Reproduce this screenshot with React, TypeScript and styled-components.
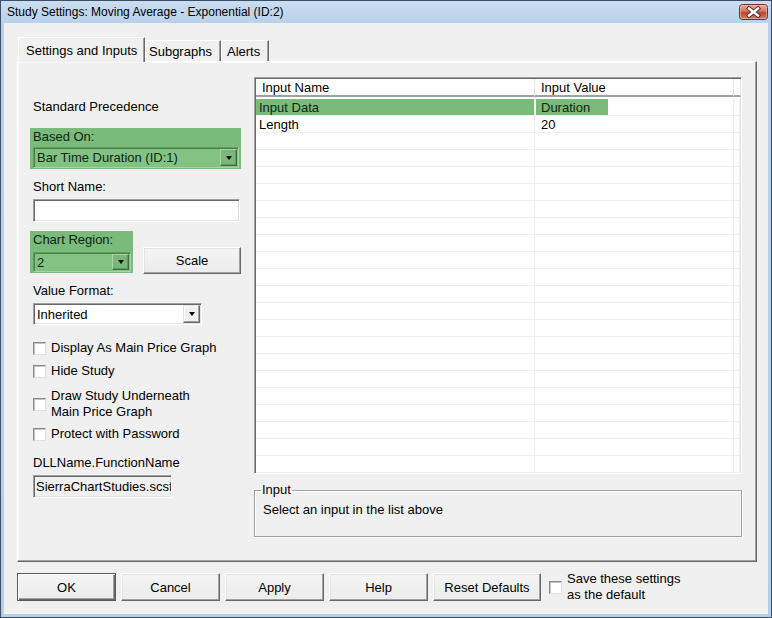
import React from "react";
import styled, { createGlobalStyle, css } from "styled-components";

const GlobalStyle = createGlobalStyle`
  html, body {
    margin: 0;
    padding: 0;
    background: #ffffff;
  }
  body {
    font-family: "Liberation Sans", Arial, sans-serif;
    font-size: 13px;
    color: #000;
  }
  * {
    box-sizing: border-box;
  }
`;

const GREEN = "#7aba7a";
const GREEN_FIELD = "#82c282";

const inputRows = [
  { name: "Input Data", value: "Duration", active: true },
  { name: "Length", value: "20", active: false },
];

const EMPTY_ROWS = 22;

const Window = styled.div`
  width: 772px;
  height: 618px;
  border: 1px solid #3d4f66;
  background: linear-gradient(#cadcf0, #b9d1ea 22px, #b6cfe9);
  display: flex;
  flex-direction: column;
`;

const TitleBar = styled.div`
  height: 22px;
  display: flex;
  align-items: center;
  justify-content: space-between;
  padding: 0 3px 0 6px;
  font-size: 12px;
  color: #000;
`;

const Client = styled.div`
  flex: 1;
  margin: 0 3px 3px 3px;
  background: #f0f0f0;
  padding: 14px 0 0 13px;
  display: flex;
  flex-direction: column;
`;

const TabStrip = styled.div`
  display: flex;
  align-items: flex-end;
  height: 24px;
  padding-left: 1px;
  position: relative;
  z-index: 1;
`;

const Tab = styled.div<{ $active?: boolean; $w: number; $pl: number }>`
  width: ${(p) => p.$w}px;
  padding-left: ${(p) => p.$pl}px;
  height: ${(p) => (p.$active ? 25 : 21)}px;
  margin-bottom: ${(p) => (p.$active ? -1 : 0)}px;
  display: flex;
  align-items: center;
  background: #f0f0f0;
  border: 1px solid;
  border-bottom: none;
  border-color: #ffffff #696969 transparent #ffffff;
  box-shadow: inset -1px 0 #a0a0a0;
  white-space: nowrap;
`;

const Panel = styled.div`
  width: 740px;
  height: 501px;
  border: 1px solid;
  border-color: #ffffff #696969 #696969 #ffffff;
  box-shadow: inset -1px -1px #a0a0a0, inset 1px 1px #f8f8f8;
  display: grid;
  grid-template-columns: 208px 488px;
  column-gap: 13px;
  padding-left: 15px;
`;

const LeftColumn = styled.div`
  display: flex;
  flex-direction: column;
  align-items: flex-start;
  padding-top: 37px;
`;

const RightColumn = styled.div`
  display: flex;
  flex-direction: column;
  padding-top: 15px;
`;

const Label = styled.div<{ $mt?: number }>`
  line-height: 16px;
  margin-top: ${(p) => p.$mt ?? 0}px;
  white-space: nowrap;
`;

const GreenBox = styled.div<{ $mt: number; $gap: number }>`
  margin-top: ${(p) => p.$mt}px;
  margin-left: -3px;
  padding: 0 2px 1px 3px;
  background: ${GREEN};
  display: flex;
  flex-direction: column;
  gap: ${(p) => p.$gap}px;
  color: #0f260f;
`;

const GreenLabel = styled.div`
  line-height: 17px;
  height: 17px;
`;

const Select = styled.div<{ $w: number; $h: number; $green?: boolean; $mt?: number }>`
  width: ${(p) => p.$w}px;
  height: ${(p) => p.$h}px;
  margin-top: ${(p) => p.$mt ?? 0}px;
  display: flex;
  align-items: stretch;
  border: 1px solid;
  padding: 1px;
  ${(p) =>
    p.$green
      ? css`
          background: ${GREEN_FIELD};
          border-color: #5f9a5f #a6d6a6 #a6d6a6 #5f9a5f;
          box-shadow: inset 1px 1px #4a7e4a;
          color: #0f260f;
        `
      : css`
          background: #ffffff;
          border-color: #a0a0a0 #ffffff #ffffff #a0a0a0;
          box-shadow: inset 1px 1px #696969, inset -1px -1px #e3e3e3;
        `}
`;

const SelectText = styled.div`
  flex: 1;
  display: flex;
  align-items: center;
  padding-left: 2px;
  white-space: nowrap;
  overflow: hidden;
`;

const DropButton = styled.div<{ $green?: boolean }>`
  width: 17px;
  display: flex;
  align-items: center;
  justify-content: center;
  border: 1px solid;
  border-color: ${(p) => (p.$green ? "#a6d6a6 #3f6f3f #3f6f3f #a6d6a6" : "#e3e3e3 #696969 #696969 #e3e3e3")};
  background: ${(p) => (p.$green ? "#7ab87a" : "#f0f0f0")};
  box-shadow: ${(p) => (p.$green ? "inset -1px -1px #5f965f" : "inset -1px -1px #a0a0a0, inset 1px 1px #ffffff")};

  &::after {
    content: "";
    border-left: 3.5px solid transparent;
    border-right: 3.5px solid transparent;
    border-top: 4px solid #000;
  }
`;

const TextBox = styled.div<{ $w: number; $mt: number; $disabled?: boolean }>`
  width: ${(p) => p.$w}px;
  height: 23px;
  margin-top: ${(p) => p.$mt}px;
  border: 1px solid;
  border-color: #a0a0a0 #ffffff #ffffff #a0a0a0;
  box-shadow: inset 1px 1px #696969, inset -1px -1px #e3e3e3;
  background: ${(p) => (p.$disabled ? "#f0f0f0" : "#ffffff")};
  padding: 0 2px;
  display: flex;
  align-items: center;
  white-space: nowrap;
  overflow: hidden;
`;

const RegionRow = styled.div`
  margin-top: 9px;
  display: flex;
  align-items: flex-start;
  gap: 10px;
`;

const PushButton = styled.button<{ $w: number; $h?: number; $mt?: number; $default?: boolean }>`
  width: ${(p) => p.$w}px;
  height: ${(p) => p.$h ?? 28}px;
  margin-top: ${(p) => p.$mt ?? 0}px;
  padding: 0;
  font: inherit;
  color: #000;
  background: linear-gradient(#f4f4f4, #ececec);
  border: 1px solid;
  border-color: #ffffff #696969 #696969 #ffffff;
  box-shadow: inset -1px -1px #a0a0a0, inset 1px 1px #e3e3e3;
  ${(p) =>
    p.$default &&
    css`
      border-color: #5a5a5a;
      box-shadow: inset 1px 1px #ffffff, inset -1px -1px #696969, inset -2px -2px #a0a0a0;
    `}
`;

const CheckRow = styled.div<{ $mt: number }>`
  margin-top: ${(p) => p.$mt}px;
  display: flex;
  align-items: center;
  gap: 5px;
  line-height: 16px;
`;

const CheckBox = styled.span`
  width: 13px;
  height: 13px;
  flex: none;
  background: #ffffff;
  border: 1px solid;
  border-color: #8a8a8a #e0e0e0 #e0e0e0 #8a8a8a;
  box-shadow: inset 1px 1px #c4c4c4;
`;

const ListView = styled.div`
  height: 397px;
  border: 1px solid;
  border-color: #a0a0a0 #ffffff #ffffff #a0a0a0;
  box-shadow: inset 1px 1px #696969, inset -1px -1px #e3e3e3;
  background: #ffffff;
  padding: 1px;
  overflow: hidden;
`;

const GridRow = styled.div`
  display: grid;
  grid-template-columns: 279px 199px 1fr;
`;

const HeaderCell = styled.div`
  height: 18px;
  display: flex;
  align-items: center;
  padding-left: 6px;
  border-right: 1px solid #e5e5e5;
  border-bottom: 2px solid #a0a0a0;
  white-space: nowrap;
`;

const Rows = styled.div`
  padding-top: 2px;
`;

const Cell = styled.div<{ $active?: boolean; $pl: number }>`
  height: 17px;
  display: flex;
  align-items: center;
  padding-left: ${(p) => p.$pl}px;
  border-right: 1px solid #f0f0f0;
  border-bottom: 1px solid #f0f0f0;
  background: ${(p) => (p.$active ? GREEN : "transparent")};
  color: ${(p) => (p.$active ? "#0f260f" : "#000")};
  white-space: nowrap;
`;

const ValueHighlight = styled.span`
  width: 72px;
  height: 16px;
  margin-left: 1px;
  padding-left: 5px;
  display: flex;
  align-items: center;
  background: ${GREEN};
  color: #0f260f;
`;

const GroupBox = styled.fieldset`
  margin: 8px 0 0;
  height: 55px;
  padding: 0 8px 0 7px;
  border: 1px solid #a0a0a0;
  box-shadow: 1px 1px #ffffff, inset 1px 1px #ffffff;
  min-width: 0;

  legend {
    padding: 0 1px;
    margin-left: -1px;
    line-height: 16px;
  }
`;

const GroupText = styled.div`
  padding: 4px 0 0 1px;
  line-height: 16px;
`;

const ButtonBar = styled.div`
  margin-top: 9px;
  display: flex;
  align-items: center;
  gap: 5px;
`;

const SaveDefault = styled.div`
  margin-left: 3px;
  display: flex;
  align-items: center;
  gap: 5px;
  line-height: 16px;
`;

const CloseButton = () => (
  <svg width="29" height="16" viewBox="0 0 29 16">
    <defs>
      <linearGradient id="closeRed" x1="0" y1="0" x2="0" y2="1">
        <stop offset="0" stopColor="#eab0a2" />
        <stop offset="0.45" stopColor="#d5735c" />
        <stop offset="0.55" stopColor="#c2432b" />
        <stop offset="1" stopColor="#d7826a" />
      </linearGradient>
    </defs>
    <rect x="0.5" y="0.5" width="28" height="15" rx="3" fill="url(#closeRed)" stroke="#6e3126" />
    <rect x="1.5" y="1.5" width="26" height="13" rx="2" fill="none" stroke="#f2c4b8" strokeOpacity="0.6" />
    <path d="M10 4.5 L19 11.5 M19 4.5 L10 11.5" stroke="#4a2a26" strokeWidth="4.2" strokeLinecap="square" />
    <path d="M10 4.5 L19 11.5 M19 4.5 L10 11.5" stroke="#ffffff" strokeWidth="2.4" strokeLinecap="square" />
  </svg>
);

export default function App() {
  return (
    <>
      <GlobalStyle />
      <Window>
        <TitleBar>
          <span>Study Settings: Moving Average - Exponential (ID:2)</span>
          <CloseButton />
        </TitleBar>
        <Client>
          <TabStrip>
            <Tab $active $w={127} $pl={7}>Settings and Inputs</Tab>
            <Tab $w={76} $pl={3}>Subgraphs</Tab>
            <Tab $w={48} $pl={5}>Alerts</Tab>
          </TabStrip>
          <Panel>
            <LeftColumn>
              <Label>Standard Precedence</Label>

              <GreenBox $mt={13} $gap={2}>
                <GreenLabel>Based On:</GreenLabel>
                <Select $w={206} $h={21} $green>
                  <SelectText>Bar Time Duration (ID:1)</SelectText>
                  <DropButton $green />
                </Select>
              </GreenBox>

              <Label $mt={10}>Short Name:</Label>
              <TextBox $w={207} $mt={4} />

              <RegionRow>
                <GreenBox $mt={0} $gap={4}>
                  <GreenLabel>Chart Region:</GreenLabel>
                  <Select $w={98} $h={20} $green>
                    <SelectText>2</SelectText>
                    <DropButton $green />
                  </Select>
                </GreenBox>
                <PushButton $w={98} $h={27} $mt={16}>Scale</PushButton>
              </RegionRow>

              <Label $mt={9}>Value Format:</Label>
              <Select $w={169} $h={22} $mt={4}>
                <SelectText>Inherited</SelectText>
                <DropButton />
              </Select>

              <CheckRow $mt={15}>
                <CheckBox />
                <span>Display As Main Price Graph</span>
              </CheckRow>
              <CheckRow $mt={7}>
                <CheckBox />
                <span>Hide Study</span>
              </CheckRow>
              <CheckRow $mt={9}>
                <CheckBox />
                <span>
                  Draw Study Underneath
                  <br />
                  Main Price Graph
                </span>
              </CheckRow>
              <CheckRow $mt={6}>
                <CheckBox />
                <span>Protect with Password</span>
              </CheckRow>

              <Label $mt={13}>DLLName.FunctionName</Label>
              <TextBox $w={139} $mt={4} $disabled>
                SierraChartStudies.scsf_MovingAverageExponential
              </TextBox>
            </LeftColumn>

            <RightColumn>
              <ListView>
                <GridRow>
                  <HeaderCell>Input Name</HeaderCell>
                  <HeaderCell>Input Value</HeaderCell>
                  <HeaderCell />
                </GridRow>
                <Rows>
                  {inputRows.map((row) => (
                    <GridRow key={row.name}>
                      <Cell $active={row.active} $pl={3}>{row.name}</Cell>
                      <Cell $pl={row.active ? 0 : 6}>
                        {row.active ? <ValueHighlight>{row.value}</ValueHighlight> : row.value}
                      </Cell>
                      <Cell $pl={0} />
                    </GridRow>
                  ))}
                  {Array.from({ length: EMPTY_ROWS }).map((_, i) => (
                    <GridRow key={i}>
                      <Cell $pl={3} />
                      <Cell $pl={6} />
                      <Cell $pl={0} />
                    </GridRow>
                  ))}
                </Rows>
              </ListView>

              <GroupBox>
                <legend>Input</legend>
                <GroupText>Select an input in the list above</GroupText>
              </GroupBox>
            </RightColumn>
          </Panel>

          <ButtonBar>
            <PushButton $w={99} $default>OK</PushButton>
            <PushButton $w={99}>Cancel</PushButton>
            <PushButton $w={99}>Apply</PushButton>
            <PushButton $w={99}>Help</PushButton>
            <PushButton $w={108}>Reset Defaults</PushButton>
            <SaveDefault>
              <CheckBox />
              <span>
                Save these settings
                <br />
                as the default
              </span>
            </SaveDefault>
          </ButtonBar>
        </Client>
      </Window>
    </>
  );
}
